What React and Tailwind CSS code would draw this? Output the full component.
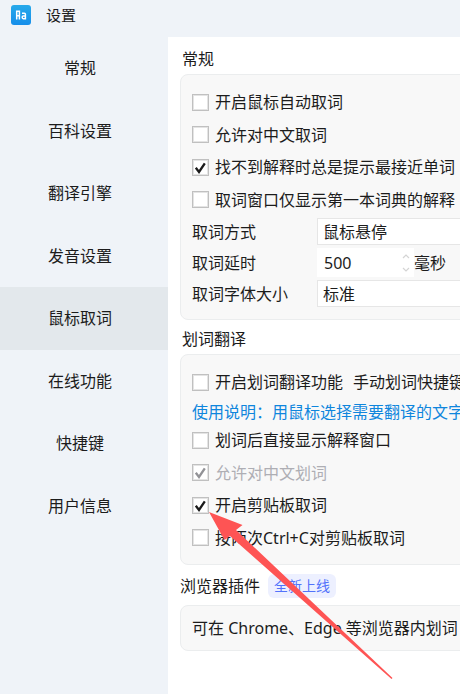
import React from 'react';

const TABS = ['常规', '百科设置', '翻译引擎', '发音设置', '鼠标取词', '在线功能', '快捷键', '用户信息'];

function Logo() {
  return (
    <svg viewBox="0 0 20 20" className="h-5 w-5" aria-hidden="true">
      <defs>
        <linearGradient id="logo" x1="0" y1="0" x2="0" y2="1">
          <stop offset="0" stopColor="#27a9ea" />
          <stop offset="1" stopColor="#168eea" />
        </linearGradient>
      </defs>
      <rect width="20" height="20" rx="3" fill="url(#logo)" />
      <g fill="none" stroke="#fff" strokeWidth="1.5">
        <path d="M5.7 14.5V6.2H8.4V14.5M5.7 10.7H8.4" />
        <path d="M11 8.2H13.4Q14.4 8.2 14.4 9.2V13.7H12.2Q11.2 13.7 11.2 12.3T12.2 10.9H14.2" />
      </g>
    </svg>
  );
}

function Check({ label, ...props }) {
  return (
    <label className="flex items-center gap-[6px]">
      <span className="relative flex">
        <input type="checkbox" className="peer h-[17px] w-[17px] appearance-none border border-[#c0c0c0] bg-white inset-ring inset-ring-[#e4e4e4]" { ...props } />
        <svg viewBox="0 0 17 17" className="pointer-events-none absolute inset-0 hidden text-[#1a1a1a] peer-checked:block peer-disabled:text-[#929296]" aria-hidden="true">
          <path d="M3.8 8.8L7 13L12.8 4.4" fill="none" stroke="currentColor" strokeWidth="2.3" />
        </svg>
      </span>
      <span className={ props.disabled ? 'text-[#aeaeb4]' : '' }>{ label }</span>
    </label>
  );
}

function Card({ children }) {
  return <div className="rounded-lg border border-[#ebedee] bg-[#f8f8f8] px-[11px]">{ children }</div>;
}

function Choice({ id, label, options }) {
  return (
    <div className="flex items-center">
      <label htmlFor={ id } className="w-[125px]">{ label }</label>
      <select id={ id } className="h-[27px] flex-1 appearance-none border border-[#e6e6e6] bg-white px-[5px] leading-6">
        { options.map((o) => <option key={ o }>{ o }</option>) }
      </select>
    </div>
  );
}

function Arrow() {
  return (
    <svg viewBox="0 0 184 168" className="pointer-events-none h-[168px] w-[184px]" aria-hidden="true">
      <path d="M0 0L33.5 13L27 18L183.5 166L182.5 167L21 24L15.5 28Z" fill="#fe5454" />
    </svg>
  );
}

export default function App() {
  return (
    <div className="flex min-h-screen flex-col overflow-hidden bg-[#eff3f8] font-['Noto_Sans','Noto_Sans_CJK_SC',sans-serif] text-base leading-6 text-[#1c1c1c]">
      <header className="flex h-[37px] items-center gap-[15px] px-[11px] pb-[7px]">
        <Logo />
        <h1 className="text-[15px]">设置</h1>
      </header>
      <div className="flex flex-1">
        <nav className="grid h-[500px] w-[168px] flex-none grid-rows-8">
          { TABS.map((t) => (
            <button key={ t } type="button" className={ t === '鼠标取词' ? 'bg-[#e3e8ec] pr-2' : 'pr-2' }>{ t }</button>
          )) }
        </nav>
        <main className="min-w-0 flex-1 overflow-hidden bg-white pt-[10px] pl-3">
          <div className="flex min-w-[480px] flex-col gap-[7px]">
            <section>
              <h2 className="mb-[3px] pl-[2px]">常规</h2>
              <Card>
                <div className="grid h-[141px] grid-rows-4 pt-[11px]">
                  <Check label="开启鼠标自动取词" />
                  <Check label="允许对中文取词" />
                  <Check label="找不到解释时总是提示最接近单词" defaultChecked />
                  <Check label="取词窗口仅显示第一本词典的解释" />
                </div>
                <div className="flex flex-col gap-[3px] pt-[2px] pb-3">
                  <Choice id="mode" label="取词方式" options={ ['鼠标悬停'] } />
                  <div className="flex items-center">
                    <label htmlFor="delay" className="w-[125px]">取词延时</label>
                    <div className="flex h-[29px] w-[97px] items-center bg-white pr-1 pl-[7px]">
                      <input id="delay" type="text" defaultValue="500" className="w-0 flex-1 bg-transparent outline-none" />
                      <svg viewBox="0 0 8 18" className="h-[18px] w-2" aria-hidden="true">
                        <path d="M1 4L4 1L7 4M1 14L4 17L7 14" fill="none" stroke="#d4d4d4" strokeWidth="1.2" />
                      </svg>
                    </div>
                    <span>毫秒</span>
                  </div>
                  <Choice id="size" label="取词字体大小" options={ ['标准'] } />
                </div>
              </Card>
            </section>

            <section>
              <h2 className="mb-[3px] pl-[2px]">划词翻译</h2>
              <Card>
                <div className="flex h-[43px] items-center gap-[10px] pt-[11px]">
                  <Check label="开启划词翻译功能" />
                  <span>手动划词快捷键</span>
                </div>
                <p className="h-[26px] whitespace-nowrap leading-7 text-[#0f86dd]">使用说明：用鼠标选择需要翻译的文字</p>
                <div className="mb-[10px] grid h-[130px] grid-rows-4">
                  <Check label="划词后直接显示解释窗口" />
                  <Check label="允许对中文划词" defaultChecked disabled />
                  <div className="relative flex items-center">
                    <Check label="开启剪贴板取词" defaultChecked />
                    <div className="absolute top-[23px] left-[17px] z-10">
                      <Arrow />
                    </div>
                  </div>
                  <Check label="按两次Ctrl+C对剪贴板取词" />
                </div>
              </Card>
            </section>

            <section>
              <div className="mt-[2px] mb-[7px] flex items-center gap-2">
                <h2>浏览器插件</h2>
                <span className="rounded-md bg-[#edf0ff] px-[6px] text-sm leading-6 text-[#5272fb]">全新上线</span>
              </div>
              <Card>
                <p className="py-[10px] whitespace-nowrap">可在 Chrome、Edge 等浏览器内划词</p>
              </Card>
            </section>
          </div>
        </main>
      </div>
    </div>
  );
}
